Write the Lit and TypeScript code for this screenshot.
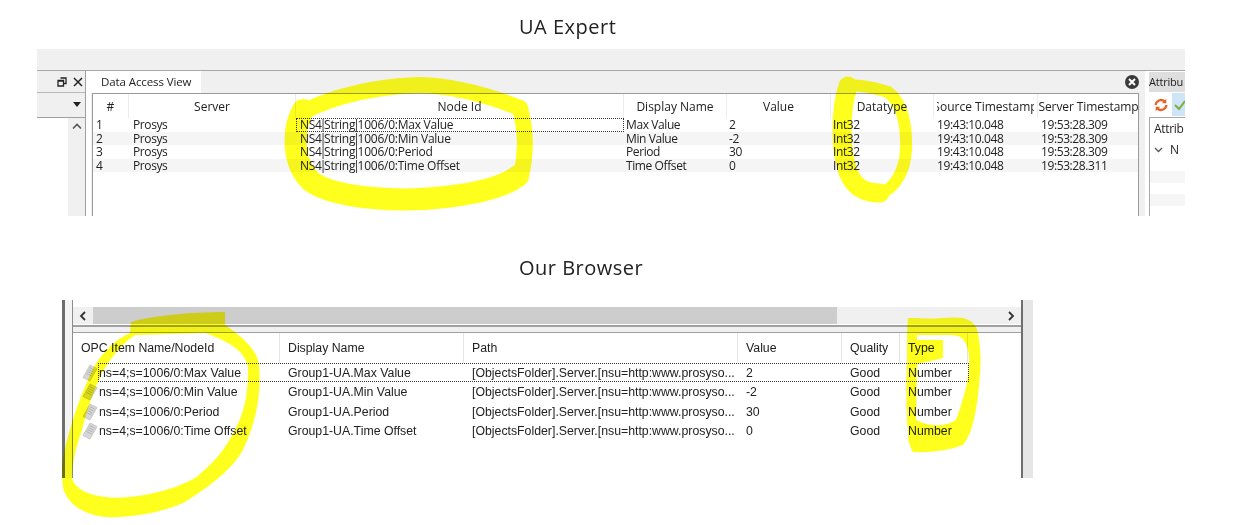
import { LitElement, html, css, svg } from "lit";
import { customElement } from "lit/decorators.js";

const uaRows = [
  ["1", "Prosys", "NS4|String|1006/0:Max Value", "Max Value", "2", "Int32", "19:43:10.048", "19:53:28.309"],
  ["2", "Prosys", "NS4|String|1006/0:Min Value", "Min Value", "-2", "Int32", "19:43:10.048", "19:53:28.309"],
  ["3", "Prosys", "NS4|String|1006/0:Period", "Period", "30", "Int32", "19:43:10.048", "19:53:28.309"],
  ["4", "Prosys", "NS4|String|1006/0:Time Offset", "Time Offset", "0", "Int32", "19:43:10.048", "19:53:28.311"],
];
const uaHead = ["#", "Server", "Node Id", "Display Name", "Value", "Datatype", "Source Timestamp", "Server Timestamp"];
const path = "[ObjectsFolder].Server.[nsu=http:www.prosyso...";
const brRows = [
  ["ns=4;s=1006/0:Max Value", "Group1-UA.Max Value", path, "2", "Good", "Number"],
  ["ns=4;s=1006/0:Min Value", "Group1-UA.Min Value", path, "-2", "Good", "Number"],
  ["ns=4;s=1006/0:Period", "Group1-UA.Period", path, "30", "Good", "Number"],
  ["ns=4;s=1006/0:Time Offset", "Group1-UA.Time Offset", path, "0", "Good", "Number"],
];
const brHead = ["OPC Item Name/NodeId", "Display Name", "Path", "Value", "Quality", "Type"];

const docIcon = svg`<svg class="doc" viewBox="0 0 18 18" width="18" height="18">
  <path d="M9 1 L16 4.5 L9 17 L2 13.5 Z" fill="#d6d6d6" stroke="#c2c2c2" stroke-width=".8"/>
  <path d="M8.6 3.5 L13.6 6 M7.6 5.5 L12.6 8 M6.6 7.5 L11.6 10 M5.6 9.5 L10.6 12" stroke="#b0b0b0" stroke-width=".9"/>
</svg>`;

const piped = (text: string) => {
  const parts = text.split("|");
  return parts.map((p, i) => (i < parts.length - 1 ? html`${p}<span class="pipe">|</span>` : html`${p}`));
};

@customElement("app-root")
export class AppRoot extends LitElement {
  static styles = css`
    :host {
      display: block; position: relative; width: 1233px; height: 525px; overflow: hidden;
      background: #fff; color: #222; font-family: "Open Sans", "Noto Sans", sans-serif; font-size: 12px;
    }
    .title { height: 49px; padding-top: 13px; padding-left: 519px; box-sizing: border-box; font-size: 20px; line-height: 28px; letter-spacing: .5px; }
    .t2 { height: 84px; padding-top: 38px; }

    .ua { width: 1148px; margin-left: 37px; height: 167px; display: flex; flex-direction: column; }
    .band { height: 22px; flex: none; background: #f0f0f0; border-bottom: 1px solid #a8a8a8; box-sizing: border-box; }
    .ua-body { flex: 1; display: flex; min-height: 0; }

    .left { width: 48px; flex: none; display: flex; flex-direction: column; border-right: 1px solid #a0a0a0; }
    .dock-title { height: 21px; background: #f0f0f0; display: flex; align-items: center; justify-content: flex-end; gap: 6px; padding-right: 2px; border-bottom: 1px solid #b8b8b8; flex: none; }
    .combo { height: 24px; background: #f0f0f0; border-bottom: 1px solid #a0a0a0; display: flex; align-items: center; justify-content: flex-end; padding-right: 3px; flex: none; }
    .left-rest { flex: 1; display: flex; justify-content: flex-end; }
    .vscroll { width: 17px; background: #f0f0f0; display: flex; justify-content: center; padding-top: 5px; box-sizing: border-box; }

    .main { width: 1054px; flex: none; margin-left: 5px; display: flex; flex-direction: column; background: #f0f0f0; }
    .tabs { height: 22px; flex: none; display: flex; justify-content: space-between; align-items: center; }
    .tab { background: #fff; height: 22px; width: 110px; box-sizing: border-box; padding-left: 10px; line-height: 21px; font-size: 11.5px; letter-spacing: -.1px; }
    .tabs svg { margin-right: 5px; }
    .tree { flex: 1; background: #fff; border: 1px solid #9a9a9a; border-bottom: none; margin-left: 1px; width: 1047px; box-sizing: border-box; }
    .ua-grid, .ua-row { display: grid; grid-template-columns: 36px 167px 328px 103px 104px 103px 104px 102px; }
    .ua-grid { height: 24px; }
    .ua-h { display: flex; padding: 0 3px; overflow: hidden; white-space: nowrap; border-right: 1px solid #ececec; font-size: 12px; }
    .ua-h:last-child { padding: 0; letter-spacing: -.1px; }
    .clip { flex: 1; min-width: 0; display: flex; justify-content: center; align-items: center; overflow: hidden; }
    .clip span { flex: none; }
    .ua-row { height: 13.5px; line-height: 14px; font-size: 12px; letter-spacing: -.4px; }
    .ua-row:nth-of-type(odd) { background: #f5f5f5; }
    .ua-c { padding-left: 3px; white-space: nowrap; }
    .ua-c:nth-child(2) { padding-left: 4px; }
    .ua-c:nth-child(4), .ua-c:nth-child(5), .ua-c:nth-child(6) { padding-left: 2px; }
    .ua-c.node { letter-spacing: -.25px; padding-left: 4px; }
    .pipe { margin: 0 -2px; }
    .ua-c.focus { outline: 1px dotted #333; outline-offset: -1px; }

    .right { flex: 1; margin-left: 4px; background: #fff; display: flex; flex-direction: column; min-width: 0; overflow: hidden; }
    .rtab { height: 20px; background: #dedede; margin-top: 1px; line-height: 20px; font-size: 11px; flex: none; overflow: hidden; letter-spacing: -.2px; }
    .rtools { height: 25px; display: flex; align-items: center; gap: 3px; padding-left: 4px; flex: none; }
    .rtools svg { flex: none; }
    .rcheck { width: 20px; height: 23px; background: #cfe4f7; display: flex; align-items: center; padding-left: 2px; box-sizing: border-box; flex: none; }
    .rbox { flex: 1; border: 1px solid #a8a8a8; border-right: none; border-bottom: none; font-size: 12px; overflow: hidden; white-space: nowrap; letter-spacing: -.3px; }
    .rl { height: 21px; line-height: 21px; padding-left: 4px; display: flex; align-items: center; gap: 7px; }
    .rl.alt { background: #f6f6f6; height: 12px; margin-top: 11px; }

    .br { width: 971px; margin-left: 62px; height: 178px; display: flex; }
    .br-bar { width: 3px; background: #6e6e6e; flex: none; }
    .br-gap { width: 7px; background: #f4f4f4; flex: none; }
    .br-main { width: 949px; flex: none; border-left: 1px solid #8c8c8c; box-sizing: border-box; display: flex; flex-direction: column; }
    .br-rb { width: 2px; background: #6e6e6e; flex: none; }
    .br-rg { width: 10px; background: #e6e6e6; flex: none; }
    .top-gap { height: 7px; flex: none; }
    .hs { height: 17px; flex: none; display: flex; align-items: center; background: #f0f0f0; }
    .hs .arrow { width: 20px; display: flex; justify-content: center; flex: none; }
    .hs .thumb { width: 744px; height: 17px; background: #cdcdcd; flex: none; }
    .hs .track { flex: 1; }
    .sep { flex: none; background: #f0f0f0; border-top: 2px solid #a0a0a0; border-bottom: 1px solid #a0a0a0; box-sizing: border-box; margin-top: 1px; height: 8px; }
    .br-grid, .br-row { display: grid; grid-template-columns: 207px 184px 274px 104px 58px 68px; }
    .br-grid { height: 30px; }
    .br-h { display: flex; align-items: center; padding-left: 8px; border-right: 1px solid #e4e4e4; white-space: nowrap; font-size: 12.3px; font-family: "Liberation Sans", Arial, sans-serif; }
    .br-row { height: 19.4px; line-height: 20px; font-size: 12.3px; font-family: "Liberation Sans", Arial, sans-serif; position: relative; }
    .br-row.sel::after { content: ""; position: absolute; left: 25px; width: 871px; top: 0; bottom: 0; border: 1px dotted #333; box-sizing: border-box; }
    .br-c { padding-left: 8px; white-space: nowrap; }
    .br-c.first { display: flex; align-items: center; padding-left: 8px; gap: 0; }
    .doc { flex: none; }

    .marks { position: absolute; left: 0; top: 0; mix-blend-mode: multiply; pointer-events: none; }
    .fill { fill: #ffff1e; stroke: none; fill-rule: evenodd; }
  `;

  render() {
    return html`
      <div class="title">UA Expert</div>
      <section class="ua">
        <div class="band"></div>
        <div class="ua-body">
          <div class="left">
            <div class="dock-title">
              <svg width="10" height="10" viewBox="0 0 10 10"><path d="M3.5 1h5.5v5.5h-2M1 3.5h5.5v5.5h-5.5zM1 4h5.5" fill="none" stroke="#222" stroke-width="1.3"/></svg>
              <svg width="10" height="10" viewBox="0 0 10 10"><path d="M1 1l8 8M9 1l-8 8" stroke="#222" stroke-width="1.5"/></svg>
            </div>
            <div class="combo"><svg width="10" height="6" viewBox="0 0 10 6"><path d="M1 0h8l-4 5z" fill="#222"/></svg></div>
            <div class="left-rest"><div class="vscroll"><svg width="10" height="7" viewBox="0 0 10 7"><path d="M1 5.5l4-4 4 4" fill="none" stroke="#555" stroke-width="1.6"/></svg></div></div>
          </div>
          <div class="main">
            <div class="tabs">
              <div class="tab">Data Access View</div>
              <svg width="16" height="16" viewBox="0 0 16 16"><circle cx="8" cy="8" r="7" fill="#3a3a3a"/><path d="M5 5l6 6M11 5l-6 6" stroke="#fff" stroke-width="2"/></svg>
            </div>
            <div class="tree">
              <div class="ua-grid">${uaHead.map((h) => html`<div class="ua-h"><div class="clip"><span>${h}</span></div></div>`)}</div>
              ${uaRows.map((r, i) => html`<div class="ua-row">${r.map((c, j) =>
                j === 2
                  ? html`<div class="ua-c node ${i === 0 ? "focus" : ""}">${piped(c)}</div>`
                  : html`<div class="ua-c">${c}</div>`
              )}</div>`)}
            </div>
          </div>
          <div class="right">
            <div class="rtab">Attribu</div>
            <div class="rtools">
              <svg width="16" height="16" viewBox="0 0 18 16"><path d="M3 8a6 6 0 0 1 10-4M15 8a6 6 0 0 1-10 4" fill="none" stroke="#e8622a" stroke-width="2.6"/><path d="M15 1v5h-5zM3 15v-5h5z" fill="#e8622a"/></svg>
              <div class="rcheck"><svg width="12" height="12" viewBox="0 0 12 12"><path d="M1 6l4 4 6-8" fill="none" stroke="#7cae3c" stroke-width="2"/></svg></div>
            </div>
            <div class="rbox">
              <div class="rl">Attrib</div>
              <div class="rl"><svg width="9" height="6" viewBox="0 0 9 6"><path d="M1 1l3.5 3.5L8 1" fill="none" stroke="#555" stroke-width="1.3"/></svg><span>N</span></div>
              <div class="rl alt"></div>
              <div class="rl alt"></div>
            </div>
          </div>
        </div>
      </section>
      <div class="title t2">Our Browser</div>
      <section class="br">
        <div class="br-bar"></div>
        <div class="br-gap"></div>
        <div class="br-main">
          <div class="top-gap"></div>
          <div class="hs">
            <div class="arrow"><svg width="8" height="10" viewBox="0 0 8 10"><path d="M6 1L2 5l4 4" fill="none" stroke="#333" stroke-width="1.8"/></svg></div>
            <div class="thumb"></div>
            <div class="track"></div>
            <div class="arrow"><svg width="8" height="10" viewBox="0 0 8 10"><path d="M2 1l4 4-4 4" fill="none" stroke="#333" stroke-width="1.8"/></svg></div>
          </div>
          <div class="sep"></div>
          <div class="br-grid">${brHead.map((h) => html`<div class="br-h">${h}</div>`)}</div>
          ${brRows.map((r, i) => html`<div class="br-row ${i === 0 ? "sel" : ""}">${r.map((c, j) =>
            j === 0
              ? html`<div class="br-c first">${docIcon}<span>${c}</span></div>`
              : html`<div class="br-c">${c}</div>`
          )}</div>`)}
        </div>
        <div class="br-rb"></div>
        <div class="br-rg"></div>
      </section>
      <svg class="marks" width="1233" height="525" viewBox="0 0 1233 525" fill="none" stroke="#ffff1e" stroke-linecap="round" stroke-linejoin="round">
        <path stroke-width="16" d="M303 112C335 95 380 86 420 85C455 86 490 96 520 108C526 130 526 155 521 176"/>
        <path stroke-width="22" d="M303 110C292 130 292 165 312 182C335 198 400 203 445 197C480 193 505 186 518 176"/>
        <path stroke-width="19" d="M848 86C840 110 840 150 848 172C855 190 868 193 880 193"/>
        <path stroke-width="12" d="M848 86C860 84 875 88 888 92C902 102 907 125 906 150C905 170 895 190 878 194"/>
        <path class="fill" d="M130 333L131 322C150 316 190 312 225 312L225 325C240 335 258 350 259 365C262 395 255 425 243 450C232 470 205 490 183 503C160 513 130 518 105 517C85 515 68 505 63 488C61 470 62 455 70 430C75 410 85 385 95 365C105 350 115 340 130 333Z
          M205 333C225 340 246 350 248 368C248 395 245 410 235 430C225 450 212 465 195 478C170 492 130 500 105 497C90 495 75 490 72 478C73 460 75 450 82 430C87 410 92 395 99 380C105 365 120 345 135 335Z"/>
        <path class="fill" d="M908 318L917 318C935 320 950 316 963 318C972 320 977 326 978 333C981 350 981 362 980 373C979 390 977 408 973 423C971 432 967 440 963 445C950 450 930 453 913 452C909 445 908 440 908 433C906 410 906 380 907 357C907 340 907 330 908 318Z
          M943 340L943 358C930 362 920 362 917 365L916 420C930 427 945 427 956 420C965 395 972 370 968 350C965 338 960 335 950 335L917 335L917 340Z"/>
      </svg>
    `;
  }
}
